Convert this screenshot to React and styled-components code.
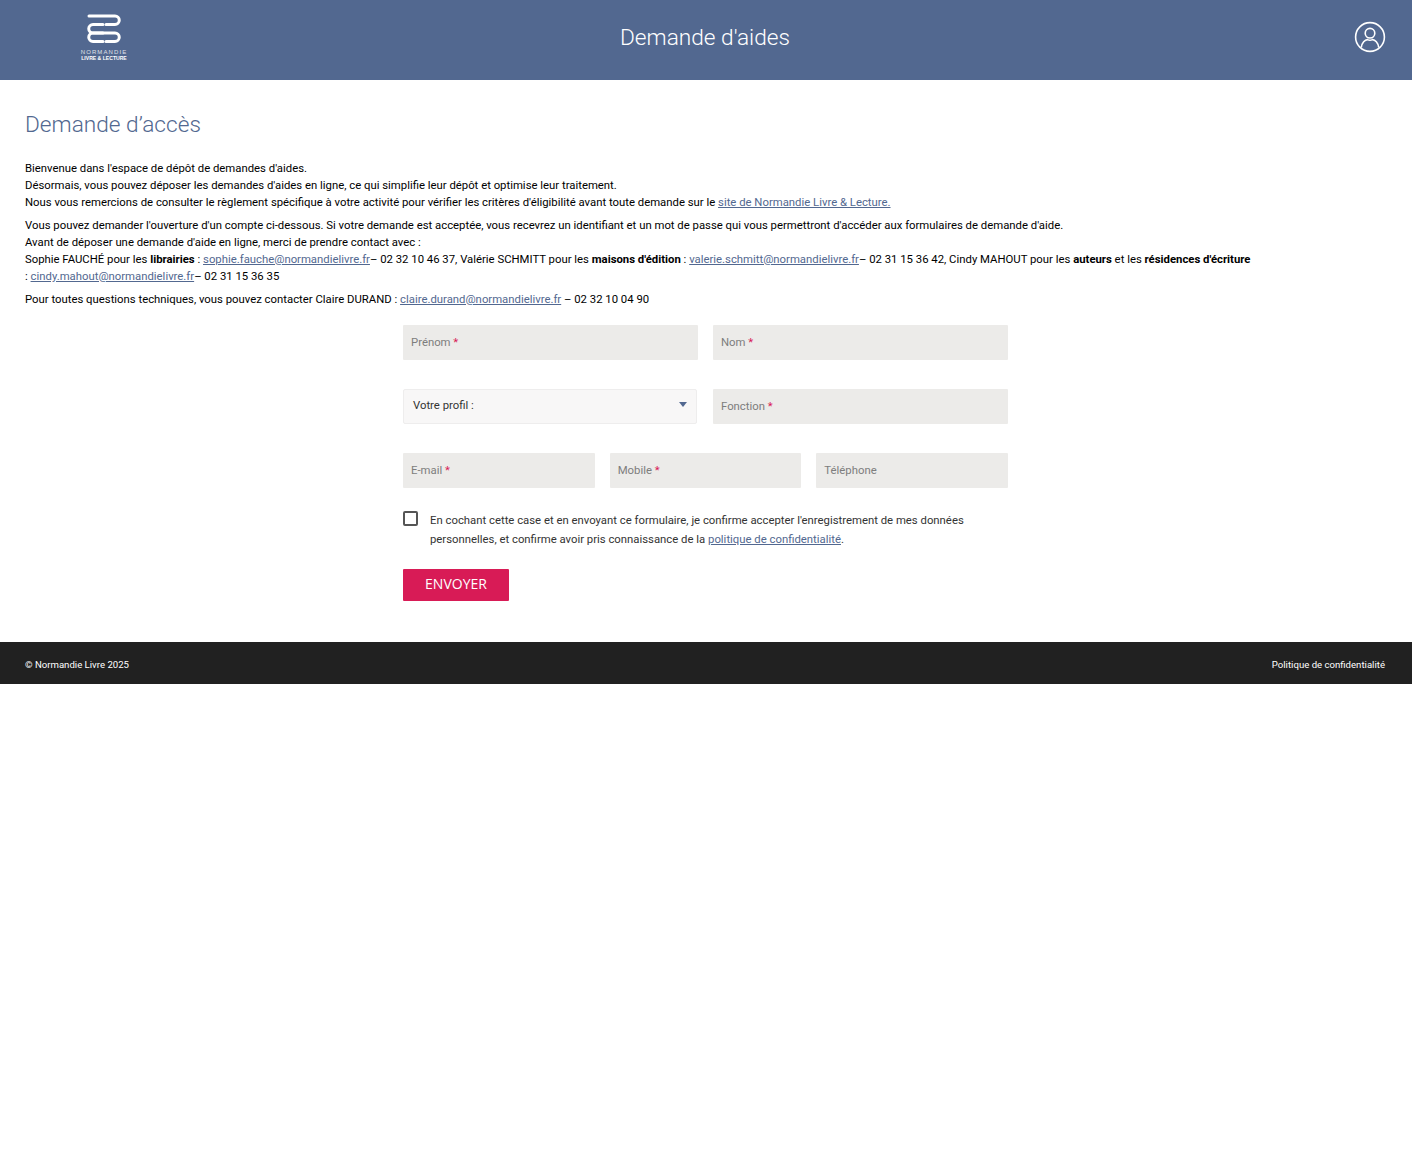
import styled, { createGlobalStyle } from "styled-components";

const GlobalStyle = createGlobalStyle`
    html, body {
        margin: 0;
        background: #fff;
    }
    * {
        box-sizing: border-box;
    }
    body {
        font-family: Roboto, "Liberation Sans", sans-serif;
        color: #000;
    }
`;

function Logo() {
    return (
        <LogoBox>
            <svg width="34" height="32" viewBox="0 0 34 32" fill="none" stroke="#fff" strokeWidth="3" strokeLinecap="round">
                <path d="M2 2H28A4.2 4.2 0 0 1 28 10.5H19" />
                <path d="M16 10.5H6A4.2 4.2 0 0 0 6 19H28A4.2 4.2 0 0 1 28 27.5H19" />
                <path d="M16 19H6A4.2 4.2 0 0 0 6 27.5H16" />
            </svg>
            <LogoTop>NORMANDIE</LogoTop>
            <LogoBottom>LIVRE &amp; LECTURE</LogoBottom>
        </LogoBox>
    );
}

function UserIcon() {
    return (
        <svg width="32" height="32" viewBox="0 0 32 32" fill="none" stroke="#fff" strokeWidth="1.6">
            <circle cx="16" cy="16" r="14.4" />
            <circle cx="16" cy="12.2" r="4.8" />
            <path d="M7.3 26.5C7.8 21.6 11 18.8 13.6 18.6C15 19.4 17 19.4 18.4 18.6C21 18.8 24.2 21.6 24.7 26.5" />
        </svg>
    );
}

function Field({ label, required }) {
    return (
        <FieldBox>
            {label}
            {required && <Star> *</Star>}
        </FieldBox>
    );
}

export default function App() {
    return (
        <>
            <GlobalStyle />
            <Header>
                <Logo />
                <HeaderTitle>Demande d'aides</HeaderTitle>
                <UserButton>
                    <UserIcon />
                </UserButton>
            </Header>
            <Main>
                <PageTitle>Demande d’accès</PageTitle>
                <Intro>
                    <p>
                        Bienvenue dans l'espace de dépôt de demandes d'aides.<br />
                        Désormais, vous pouvez déposer les demandes d'aides en ligne, ce qui simplifie leur dépôt et optimise leur traitement.<br />
                        Nous vous remercions de consulter le règlement spécifique à votre activité pour vérifier les critères d'éligibilité avant toute demande sur le <a href="#site">site de Normandie Livre &amp; Lecture.</a>
                    </p>
                    <p>
                        Vous pouvez demander l'ouverture d'un compte ci-dessous. Si votre demande est acceptée, vous recevrez un identifiant et un mot de passe qui vous permettront d'accéder aux formulaires de demande d'aide.<br />
                        Avant de déposer une demande d'aide en ligne, merci de prendre contact avec :<br />
                        Sophie FAUCHÉ pour les <b>librairies</b> : <a href="#sophie">sophie.fauche@normandielivre.fr</a>– 02 32 10 46 37, Valérie SCHMITT pour les <b>maisons d'édition</b> : <a href="#valerie">valerie.schmitt@normandielivre.fr</a>– 02 31 15 36 42, Cindy MAHOUT pour les <b>auteurs</b> et les <b>résidences d'écriture</b> : <a href="#cindy">cindy.mahout@normandielivre.fr</a>– 02 31 15 36 35
                    </p>
                    <p>
                        Pour toutes questions techniques, vous pouvez contacter Claire DURAND : <a href="#claire">claire.durand@normandielivre.fr</a> – 02 32 10 04 90
                    </p>
                </Intro>
                <Form>
                    <TwoCols>
                        <Field label="Prénom" required />
                        <Field label="Nom" required />
                    </TwoCols>
                    <TwoCols>
                        <Select>
                            Votre profil :
                            <Caret />
                        </Select>
                        <Field label="Fonction" required />
                    </TwoCols>
                    <ThreeCols>
                        <Field label="E-mail" required />
                        <Field label="Mobile" required />
                        <Field label="Téléphone" />
                    </ThreeCols>
                    <Consent>
                        <Checkbox />
                        <ConsentText>
                            En cochant cette case et en envoyant ce formulaire, je confirme accepter l'enregistrement de mes données personnelles, et confirme avoir pris connaissance de la <a href="#politique">politique de confidentialité</a>.
                        </ConsentText>
                    </Consent>
                    <SubmitButton>ENVOYER</SubmitButton>
                </Form>
            </Main>
            <Footer>
                <span>© Normandie Livre 2025</span>
                <span>Politique de confidentialité</span>
            </Footer>
        </>
    );
}

const Header = styled.header`
    display: grid;
    grid-template-columns: 1fr auto 1fr;
    align-items: center;
    height: 80px;
    padding: 0 26px 6px;
    background: #526890;
    color: #fff;
`;

const LogoBox = styled.div`
    display: flex;
    flex-direction: column;
    align-items: center;
    width: 46px;
    margin-left: 55px;
    color: #fff;
    font-family: "Liberation Sans", sans-serif;
`;

const LogoTop = styled.span`
    margin-top: 3px;
    font-size: 6px;
    line-height: 6px;
    letter-spacing: 1.1px;
    white-space: nowrap;
    opacity: 0.8;
`;

const LogoBottom = styled.span`
    font-size: 5.1px;
    line-height: 6px;
    font-weight: 700;
    white-space: nowrap;
`;

const HeaderTitle = styled.h1`
    margin: 2px 1px 0 -1px;
    font-size: 22.67px;
    font-weight: 300;
    line-height: 28px;
`;

const UserButton = styled.div`
    display: flex;
    justify-content: flex-end;
`;

const Main = styled.main`
    padding: 31px 26px 41px 25px;
`;

const PageTitle = styled.h2`
    margin: 0 0 21px;
    color: #526890;
    font-size: 22.67px;
    font-weight: 300;
    line-height: 28px;
`;

const Intro = styled.div`
    max-width: 1230px;
    font-size: 11.33px;
    line-height: 17px;

    p {
        margin: 0 0 6px;
    }

    a {
        color: #526890;
    }
`;

const Form = styled.form`
    width: 605px;
    margin: 17px auto 0;
`;

const TwoCols = styled.div`
    display: grid;
    grid-template-columns: 295px 295px;
    justify-content: space-between;
    margin-bottom: 29px;
`;

const ThreeCols = styled.div`
    display: grid;
    grid-template-columns: repeat(3, 191.67px);
    justify-content: space-between;
    margin-bottom: 23px;
`;

const FieldBox = styled.div`
    display: flex;
    align-items: center;
    height: 35px;
    padding: 0 8px 2px;
    background: #ecebe9;
    border-radius: 1px;
    color: #7d7d7d;
    font-size: 11.33px;
    white-space: pre;
`;

const Star = styled.span`
    color: #d81b56;
`;

const Select = styled.div`
    display: flex;
    align-items: center;
    justify-content: space-between;
    width: 294px;
    height: 35px;
    padding: 0 9px 4px;
    background: #f8f7f7;
    border: 1px solid #eeeded;
    border-radius: 2px;
    color: #333;
    font-size: 11.33px;
`;

const Caret = styled.span`
    width: 0;
    height: 0;
    margin-bottom: 1px;
    border-left: 4.5px solid transparent;
    border-right: 4.5px solid transparent;
    border-top: 5px solid #526890;
`;

const Consent = styled.div`
    display: flex;
    align-items: flex-start;
    gap: 12px;
`;

const Checkbox = styled.span`
    flex: none;
    width: 15px;
    height: 15px;
    border: 2px solid #555;
    border-radius: 2px;
`;

const ConsentText = styled.p`
    margin: 0;
    width: 550px;
    color: #333;
    font-size: 11.33px;
    line-height: 19px;

    a {
        color: #526890;
    }
`;

const SubmitButton = styled.button`
    display: block;
    width: 106px;
    height: 32px;
    margin-top: 20px;
    padding: 0 0 3px;
    background: #d81b56;
    border: 0;
    border-radius: 1px;
    color: #fff;
    font-family: "Open Sans", sans-serif;
    font-size: 14px;
`;

const Footer = styled.footer`
    display: flex;
    align-items: center;
    justify-content: space-between;
    height: 42px;
    padding: 2px 27px 0 25px;
    background: #212121;
    color: #fff;
    font-size: 9.6px;
`;
